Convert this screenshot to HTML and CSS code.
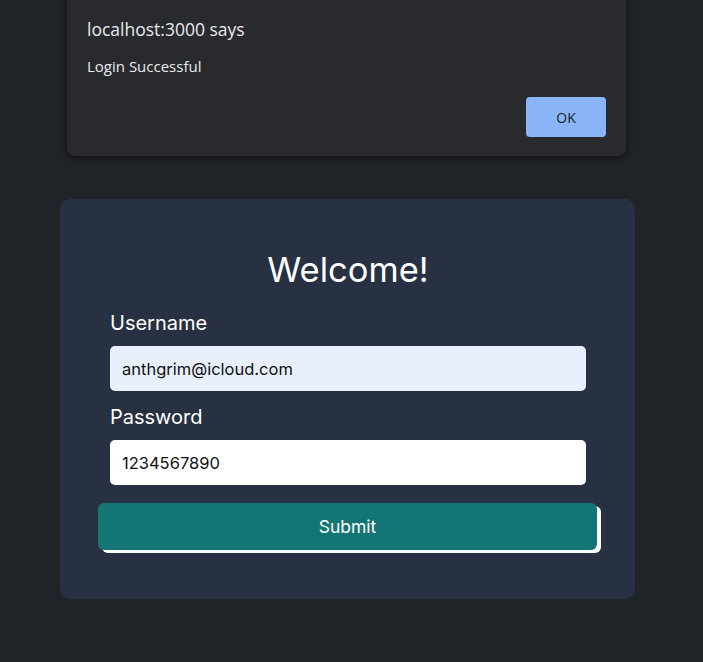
FILE: index.html
```html
<!DOCTYPE html>
<html>
<head>
<meta charset="utf-8">
<link rel="stylesheet" href="styles.css">
</head>
<body>
<div class="page">
  <div class="card">
    <h1 class="title">Welcome!</h1>
    <form class="form">
      <label class="label">Username</label>
      <div class="input autofill">anthgrim@icloud.com</div>
      <label class="label">Password</label>
      <div class="input">1234567890</div>
      <button type="button" class="submit">Submit</button>
    </form>
  </div>
</div>
<div class="dialog">
  <div class="dialog-title">localhost:3000 says</div>
  <div class="dialog-msg">Login Successful</div>
  <div class="dialog-actions"><button type="button" class="ok">OK</button></div>
</div>
</body>
</html>
```
FILE: styles.css
```css
html, body {
  margin: 0;
  padding: 0;
  background: #202327;
  height: 100%;
}
.page {
  padding: 199px 0 0 60px;
}
.card {
  width: 575px;
  height: 400px;
  box-sizing: border-box;
  background: #283142;
  border-radius: 10px;
  padding: 46px 49px 0 50px;
  font-family: Inter, "Noto Sans", sans-serif;
  color: #fff;
}
.title {
  margin: 0 0 16px 0;
  text-align: center;
  font-weight: 400;
  font-size: 34.5px;
  line-height: 50px;
}
.form {
  display: flex;
  flex-direction: column;
}
.label {
  font-size: 20px;
  line-height: 24px;
  margin-bottom: 11px;
}
.input {
  height: 45px;
  box-sizing: border-box;
  border-radius: 5px;
  background: #fff;
  color: #111;
  font-size: 16.5px;
  padding: 0 12px;
  display: flex;
  align-items: center;
  margin-bottom: 13px;
}
.input.autofill {
  background: #e8f0fe;
  margin-bottom: 14px;
}
.submit {
  margin: 5px -11px 0 -12px;
  height: 47px;
  border: none;
  border-radius: 6px;
  background: #147575;
  color: #fff;
  font-family: Inter, "Noto Sans", sans-serif;
  font-size: 17.5px;
  box-shadow: 4px 3px 0 #fff;
}
.dialog {
  position: absolute;
  left: 67px;
  top: -10px;
  width: 559px;
  height: 166px;
  box-sizing: border-box;
  background: #292a2d;
  border-radius: 8px;
  box-shadow: 0 2px 6px rgba(0,0,0,0.5);
  padding: 26px 20px 0 20px;
  font-family: "Open Sans", "Noto Sans", sans-serif;
  color: #e8eaed;
}
.dialog-title {
  font-size: 17.5px;
  line-height: 26px;
}
.dialog-msg {
  font-size: 15px;
  line-height: 20px;
  margin-top: 14px;
}
.dialog-actions {
  display: flex;
  justify-content: flex-end;
  margin-top: 21px;
}
.ok {
  width: 80px;
  height: 40px;
  border: none;
  border-radius: 4px;
  background: #8ab4f8;
  color: #202124;
  font-family: "Open Sans", "Noto Sans", sans-serif;
  font-size: 14px;
}
```
